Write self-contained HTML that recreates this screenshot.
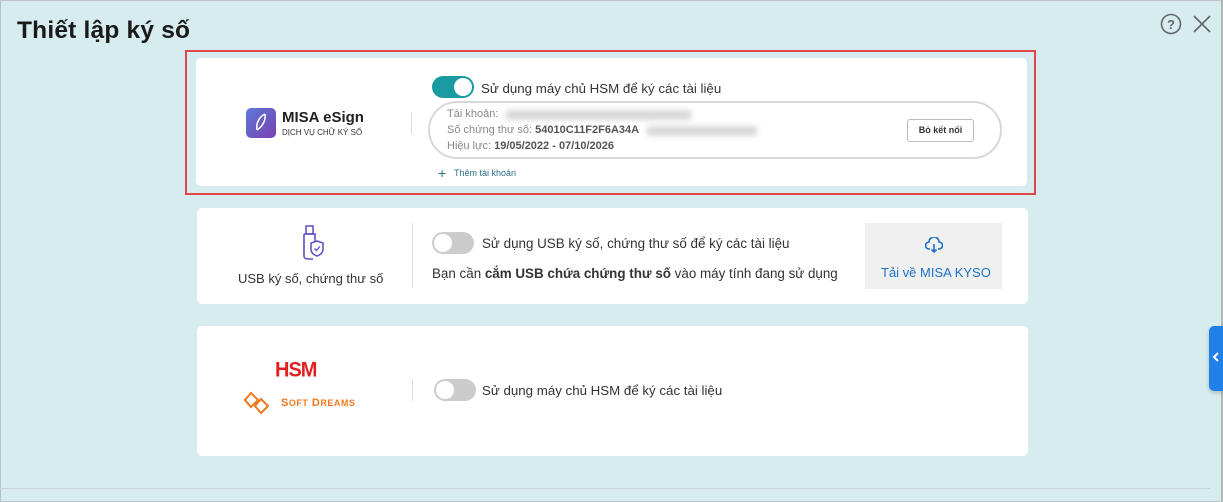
<!DOCTYPE html>
<html><head><meta charset="utf-8"><style>
*{box-sizing:border-box;margin:0;padding:0}
body{width:1223px;height:502px;overflow:hidden;background:#d7ecef;font-family:"Liberation Sans",sans-serif;color:#333;position:relative}
.frame{position:absolute;inset:0;border:1px solid #b9c2c4;border-right:2px solid #b0b8ba}
h1{position:absolute;left:17px;top:17px;font-size:24.5px;font-weight:bold;color:#1a1a1a;letter-spacing:0.2px}
.card{position:absolute;background:#fff;border-radius:5px}
.sep{position:absolute;width:1px;background:#ddd}
.tog{position:absolute;width:42px;height:22px;border-radius:11px}
.tog i{position:absolute;top:2px;width:18px;height:18px;border-radius:50%;background:#fff}
.t{position:absolute;font-size:13px;white-space:nowrap}
.blur{position:absolute;background:#d8d8d8;filter:blur(3px);height:10px}
</style></head><body>
<div class="frame"></div>
<h1>Thiết lập ký số</h1>
<svg style="position:absolute;left:1160px;top:13px" width="22" height="22" viewBox="0 0 22 22"><circle cx="11" cy="11" r="9.5" fill="none" stroke="#666" stroke-width="1.6"/><text x="11" y="16" font-size="13" text-anchor="middle" fill="#666" font-family="Liberation Sans" font-weight="bold">?</text></svg>
<svg style="position:absolute;left:1192px;top:14px" width="20" height="20" viewBox="0 0 20 20"><path d="M2 2L18 18M18 2L2 18" stroke="#666" stroke-width="1.6"/></svg>

<div style="position:absolute;left:185px;top:50px;width:851px;height:145px;border:2px solid #e04848"></div>
<div class="card" style="left:196px;top:58px;width:831px;height:128px"></div>
<svg style="position:absolute;left:246px;top:108px" width="30" height="30" viewBox="0 0 30 30"><defs><linearGradient id="g" x1="0" y1="0" x2="1" y2="1"><stop offset="0" stop-color="#5b7bd6"/><stop offset="1" stop-color="#7b3fb0"/></linearGradient></defs><rect width="30" height="30" rx="5" fill="url(#g)"/><path d="M19 6C13 9 10 15 11 22M19 6C20 12 17 18 11 22" stroke="#fff" stroke-width="1.5" fill="none"/></svg>
<div class="t" style="left:282px;top:109px;font-size:15px;font-weight:bold;color:#222">MISA eSign</div>
<div class="t" style="left:282px;top:128px;font-size:8px;color:#333">DỊCH VỤ CHỮ KÝ SỐ</div>
<div class="sep" style="left:411px;top:112px;height:22px"></div>
<div class="tog" style="left:432px;top:76px;background:#1a9ba1"><i style="right:2px"></i></div>
<div class="t" style="left:481px;top:81px;font-size:13.3px">Sử dụng máy chủ HSM để ký các tài liệu</div>
<div style="position:absolute;left:428px;top:101px;width:574px;height:58px;border:2px solid #d8d8d8;border-radius:29px"></div>
<div class="t" style="left:447px;top:108px;font-size:11px;color:#888">Tài khoản:</div>
<div class="blur" style="left:506px;top:110px;width:185px"></div>
<div class="t" style="left:447px;top:124px;font-size:11px;color:#888">Số chứng thư số: <b style="color:#555">54010C11F2F6A34A</b></div>
<div class="blur" style="left:647px;top:126px;width:110px"></div>
<div class="t" style="left:447px;top:140px;font-size:11px;color:#888">Hiệu lực: <b style="color:#555">19/05/2022 - 07/10/2026</b></div>
<div style="position:absolute;left:907px;top:119px;width:67px;height:23px;border:1px solid #bbb;border-radius:3px;font-size:9px;font-weight:bold;text-align:center;line-height:21px;color:#333">Bỏ kết nối</div>
<div class="t" style="left:438px;top:165px;font-size:14px;color:#2a6f8f">+</div>
<div class="t" style="left:454px;top:168px;font-size:9px;color:#2a6f8f">Thêm tài khoản</div>

<div class="card" style="left:197px;top:208px;width:831px;height:96px"></div>
<svg style="position:absolute;left:301px;top:225px" width="24" height="36" viewBox="0 0 24 36"><rect x="5" y="1" width="7" height="8" fill="none" stroke="#5a4fc4" stroke-width="1.5"/><path d="M3 9h11v8M3 9v22c0 2 2 3 4 3h5" fill="none" stroke="#5a4fc4" stroke-width="1.6"/><path d="M16 16l6 2v6c0 4-3 6-6 7c-3-1-6-3-6-7v-6z" fill="none" stroke="#5a4fc4" stroke-width="1.5"/><path d="M13.5 23.5l2 2l3.5-4" fill="none" stroke="#5a4fc4" stroke-width="1.3"/></svg>
<div class="t" style="left:238px;top:271px">USB ký số, chứng thư số</div>
<div class="sep" style="left:412px;top:223px;height:65px"></div>
<div class="tog" style="left:432px;top:232px;background:#ccc"><i style="left:2px"></i></div>
<div class="t" style="left:482px;top:236px;font-size:13.4px">Sử dụng USB ký số, chứng thư số để ký các tài liệu</div>
<div class="t" style="left:432px;top:266px;font-size:13.4px">Bạn cần <b>cắm USB chứa chứng thư số</b> vào máy tính đang sử dụng</div>
<div style="position:absolute;left:865px;top:223px;width:137px;height:66px;background:#f0f0f0"></div>
<svg style="position:absolute;left:925px;top:237px" width="18" height="16" viewBox="0 0 18 16"><path d="M5 12H4a3.5 3.5 0 0 1 0-7a5 5 0 0 1 10 0a3 3 0 0 1 0 7h-1" fill="none" stroke="#1a73c8" stroke-width="1.6"/><path d="M9 7v8M6.5 12.5L9 15l2.5-2.5" fill="none" stroke="#1a73c8" stroke-width="1.6"/></svg>
<div class="t" style="left:881px;top:265px;color:#1a73c8">Tải về MISA KYSO</div>

<div class="card" style="left:197px;top:326px;width:831px;height:130px"></div>
<div class="t" style="left:275px;top:359px;font-size:20px;font-weight:900;color:#e32020;letter-spacing:-1px;transform:scaleY(1.05)">HSM</div>
<svg style="position:absolute;left:243px;top:390px" width="30" height="26" viewBox="0 0 30 26"><path d="M8 3l7 7-7 7-6-7zM18 9l7 7-7 7-6-7z" fill="none" stroke="#f07820" stroke-width="2"/></svg>
<div class="t" style="left:281px;top:397px;font-size:11px;font-weight:bold;color:#f07820;letter-spacing:0.5px">S<span style="font-size:9px">OFT</span> D<span style="font-size:9px">REAMS</span></div>
<div class="sep" style="left:412px;top:379px;height:22px"></div>
<div class="tog" style="left:434px;top:379px;background:#ccc"><i style="left:2px"></i></div>
<div class="t" style="left:482px;top:383px;font-size:13.3px">Sử dụng máy chủ HSM để ký các tài liệu</div>

<div style="position:absolute;left:0;top:488px;width:1210px;height:1px;background:#c8d6d8"></div>
<div style="position:absolute;left:1209px;top:326px;width:14px;height:65px;background:#1f80e8;border-radius:5px 0 0 5px;box-shadow:0 2px 4px rgba(0,0,0,.2)"></div>
<svg style="position:absolute;left:1212px;top:352px" width="8" height="10" viewBox="0 0 8 10"><path d="M6 1L2 5l4 4" stroke="#fff" stroke-width="2" fill="none"/></svg>
</body></html>
